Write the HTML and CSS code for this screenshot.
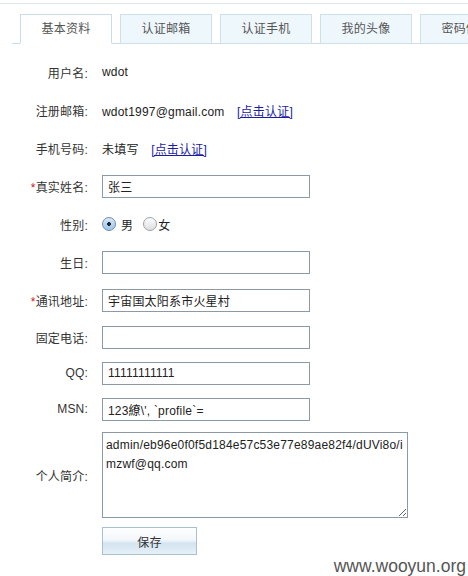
FILE: index.html
```html
<!DOCTYPE html>
<html lang="zh-CN">
<head>
    <meta charset="UTF-8">
    <title>个人资料</title>
    <link rel="stylesheet" href="styles.css">
</head>
<body>
    <div class="page">
        <div class="top-rule"></div>

        <ul class="tabs">
            <li class="tab active">基本资料</li>
            <li class="tab">认证邮箱</li>
            <li class="tab">认证手机</li>
            <li class="tab">我的头像</li>
            <li class="tab">密码修改</li>
        </ul>

        <form class="profile-form">
            <div class="row">
                <label class="label">用户名:</label>
                <div class="value">wdot</div>
            </div>
            <div class="row">
                <label class="label">注册邮箱:</label>
                <div class="value">wdot1997@gmail.com <a href="#" class="verify">[点击认证]</a></div>
            </div>
            <div class="row">
                <label class="label">手机号码:</label>
                <div class="value">未填写 <a href="#" class="verify">[点击认证]</a></div>
            </div>
            <div class="row">
                <label class="label"><span class="req">*</span>真实姓名:</label>
                <input class="field" type="text" value="张三">
            </div>
            <div class="row">
                <label class="label">性别:</label>
                <div class="value radios">
                    <input class="radio" type="radio" name="sex" checked><span class="radio-text">男</span>
                    <input class="radio" type="radio" name="sex"><span class="radio-text">女</span>
                </div>
            </div>
            <div class="row">
                <label class="label">生日:</label>
                <input class="field" type="text" value="">
            </div>
            <div class="row">
                <label class="label"><span class="req">*</span>通讯地址:</label>
                <input class="field" type="text" value="宇宙国太阳系市火星村">
            </div>
            <div class="row short">
                <label class="label">固定电话:</label>
                <input class="field" type="text" value="">
            </div>
            <div class="row short">
                <label class="label">QQ:</label>
                <input class="field" type="text" value="11111111111">
            </div>
            <div class="row short">
                <label class="label">MSN:</label>
                <input class="field" type="text" value="123繚\', `profile`=">
            </div>
            <div class="row area-row">
                <label class="label">个人简介:</label>
                <textarea class="intro">admin/eb96e0f0f5d184e57c53e77e89ae82f4/dUVi8o/imzwf@qq.com</textarea>
            </div>
            <div class="actions">
                <button type="button" class="save-button">保存</button>
            </div>
        </form>

        <div class="watermark">www.wooyun.org</div>
    </div>
</body>
</html>
```

FILE: styles.css
```css
body {
    margin: 0;
    background: #fff;
    font-family: "Liberation Sans", "Noto Sans CJK SC", sans-serif;
    font-size: 12px;
    letter-spacing: 0.2px;
    color: #333;
    overflow: hidden;
}

.page {
    position: relative;
    width: 468px;
    height: 576px;
    padding-top: 3px;
    box-sizing: border-box;
    overflow: hidden;
}

.top-rule {
    border-top: 1px solid #dde7ed;
}

.tabs {
    list-style: none;
    margin: 10px 0 0 12px;
    padding: 0 0 0 8px;
    display: flex;
    align-items: flex-end;
    height: 29px;
    border-bottom: 1px solid #c9dce7;
    white-space: nowrap;
}

.tab {
    flex-shrink: 0;
    width: 92px;
    height: 30px;
    box-sizing: border-box;
    margin-right: 8px;
    margin-bottom: -1px;
    border: 1px solid #cfe0ea;
    background: #eef7fc;
    color: #555;
    text-align: center;
    line-height: 28px;
}

.tab.active {
    background: #fff;
    border-color: #c9dce7;
    border-bottom-color: #fff;
    color: #555;
}

.profile-form {
    margin-top: 9px;
}

.row {
    display: flex;
    align-items: center;
    height: 38px;
}

.row.short {
    height: 36px;
}

.label {
    width: 88px;
    flex-shrink: 0;
    text-align: right;
    color: #333;
    margin-right: 14px;
}

.req {
    color: #d4141a;
}

.value {
    color: #222;
}

.verify {
    margin-left: 9px;
    color: #1a1aa8;
    text-decoration: underline;
}

.field {
    width: 208px;
    height: 23px;
    box-sizing: border-box;
    margin: 0;
    padding: 0 5px;
    border: 1px solid #8b9aa6;
    font-family: inherit;
    font-size: 12px;
    letter-spacing: 0.2px;
    color: #222;
    background: #fff;
}

.radios {
    display: flex;
    align-items: center;
}

.radio {
    appearance: none;
    -webkit-appearance: none;
    width: 14px;
    height: 14px;
    margin: 0;
    border: 1px solid #9aa3ab;
    border-radius: 50%;
    background: linear-gradient(#fdfdfd, #dedede);
    box-sizing: border-box;
    position: relative;
}

.radio:checked {
    border-color: #6e8eb2;
    background: radial-gradient(circle, #1d2838 0 1.6px, transparent 2.2px), linear-gradient(#d9e8f7, #9fc3e8);
}

.radio-text {
    margin: 0 10px 0 5px;
    color: #222;
}

.radio-text:last-child {
    margin: 0 0 0 1px;
}

.area-row {
    height: auto;
    margin-top: 5px;
}

.intro {
    width: 306px;
    height: 86px;
    box-sizing: border-box;
    margin: 0;
    padding: 3px 3px;
    border: 1px solid #8b9aa6;
    font-family: inherit;
    font-size: 12px;
    letter-spacing: 0.2px;
    line-height: 19px;
    color: #222;
    resize: both;
    overflow: hidden;
    word-break: break-all;
}

.actions {
    padding: 9px 0 0 102px;
}

.save-button {
    width: 95px;
    height: 28px;
    margin: 0;
    border: 1px solid #a8c0d3;
    background: linear-gradient(#fdfeff 0%, #f4f8fb 45%, #d3e4f1 60%, #e6f0f7 100%);
    font-family: inherit;
    font-size: 12px;
    color: #333;
    letter-spacing: 0.2px;
    padding: 0;
}

.watermark {
    position: absolute;
    right: 2px;
    bottom: 0;
    font-family: "Liberation Sans", sans-serif;
    font-size: 17.5px;
    letter-spacing: 0;
    line-height: 20px;
    color: #555;
}
```
